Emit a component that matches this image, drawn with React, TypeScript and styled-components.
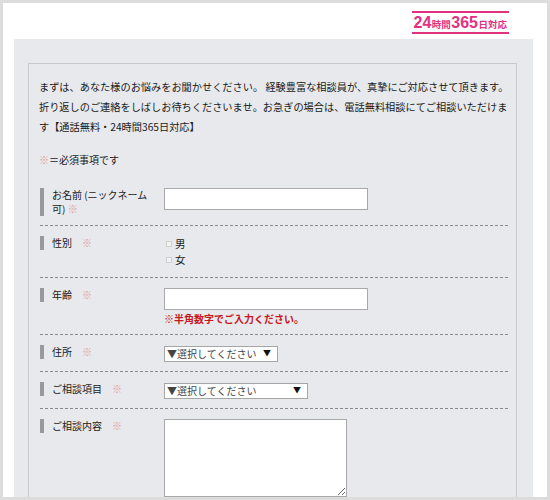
import styled, { createGlobalStyle } from 'styled-components';

const GlobalStyle = createGlobalStyle`
  body {
    margin: 0;
    font-family: 'Noto Sans CJK JP', 'Noto Sans', sans-serif;
    color: #333;
  }
`;

const App = () => {
  return (
    <>
      <GlobalStyle />
      <Frame>
        <Header>
          <Badge>
            <BadgeNum>24</BadgeNum>
            <BadgeText>時間</BadgeText>
            <BadgeNum>365</BadgeNum>
            <BadgeText>日対応</BadgeText>
          </Badge>
        </Header>

        <Panel>
          <FormBox>
            <Intro>
              まずは、あなた様のお悩みをお聞かせください。 経験豊富な相談員が、真摯にご対応させて頂きます。
              <br />
              折り返しのご連絡をしばしお待ちくださいませ。お急ぎの場合は、電話無料相談にてご相談いただけま
              <br />
              す【通話無料・24時間365日対応】
            </Intro>

            <Note>
              <Req>※</Req>＝必須事項です
            </Note>

            <Form>
              <Row>
                <Label>
                  お名前 (ニックネーム可) <Req>※</Req>
                </Label>
                <Field>
                  <TextInput type="text" />
                </Field>
              </Row>

              <Row>
                <Label>
                  性別　<Req>※</Req>
                </Label>
                <Field>
                  <CheckList>
                    <CheckItem>
                      <Check type="checkbox" />男
                    </CheckItem>
                    <CheckItem>
                      <Check type="checkbox" />女
                    </CheckItem>
                  </CheckList>
                </Field>
              </Row>

              <Row>
                <Label>
                  年齢　<Req>※</Req>
                </Label>
                <Field>
                  <TextInput type="text" />
                  <ErrorText>※半角数字でご入力ください。</ErrorText>
                </Field>
              </Row>

              <Row>
                <Label>
                  住所　<Req>※</Req>
                </Label>
                <Field>
                  <SelectWrap $width={114}>
                    <Select defaultValue="">
                      <option value="">▼選択してください</option>
                    </Select>
                  </SelectWrap>
                </Field>
              </Row>

              <Row>
                <Label>
                  ご相談項目　<Req>※</Req>
                </Label>
                <Field>
                  <SelectWrap $width={144}>
                    <Select defaultValue="">
                      <option value="">▼選択してください</option>
                    </Select>
                  </SelectWrap>
                </Field>
              </Row>

              <Row $last>
                <Label>
                  ご相談内容　<Req>※</Req>
                </Label>
                <Field>
                  <TextArea />
                </Field>
              </Row>
            </Form>
          </FormBox>
        </Panel>
      </Frame>
    </>
  );
};

export default App;

const Frame = styled.div`
  width: 550px;
  height: 500px;
  box-sizing: border-box;
  border: 3px solid #dcdcdc;
  background: #fff;
  overflow: hidden;
`;

const Header = styled.div`
  display: flex;
  justify-content: flex-end;
  height: 36px;
  box-sizing: border-box;
  padding: 8px 38px 0 0;
`;

const Badge = styled.div`
  display: flex;
  align-items: baseline;
  justify-content: center;
  width: 97px;
  height: 23px;
  box-sizing: border-box;
  border-top: 2px solid #e2317f;
  border-bottom: 2px solid #e2317f;
  color: #e2317f;
  line-height: 19px;
`;

const BadgeNum = styled.span`
  font-family: 'Liberation Sans', Arial, sans-serif;
  font-weight: bold;
  font-size: 16px;
`;

const BadgeText = styled.span`
  font-weight: bold;
  font-size: 9.5px;
  margin: 0 0.5px;
`;

const Panel = styled.div`
  margin: 0 14px 0 11px;
  padding: 24px 16px 0 14px;
  background: #e7e9ec;
  height: 100%;
`;

const FormBox = styled.div`
  border: 1px solid #c6c9cd;
  padding: 13px 4px 0 10px;
  height: 100%;
`;

const Intro = styled.p`
  margin: 0;
  font-size: 10.2px;
  line-height: 20px;
  color: #1a1a1a;
  white-space: nowrap;
`;

const Note = styled.p`
  margin: 13px 0 0;
  font-size: 10px;
  line-height: 20px;
  color: #1a1a1a;
`;

const Req = styled.span`
  color: #e39a9a;
`;

const Form = styled.div`
  margin: 8px 4px 0 1px;
`;

const Row = styled.div<{ $last?: boolean }>`
  display: grid;
  grid-template-columns: 124px 1fr;
  align-items: start;
  padding: 10px 0 9px;
  border-bottom: ${({ $last }) => ($last ? 'none' : '1px dashed #8a8a8a')};
`;

const Label = styled.div`
  border-left: 4px solid #999;
  padding: 0 14px 0 8px;
  font-size: 10px;
  line-height: 14px;
  color: #1a1a1a;
`;

const Field = styled.div`
  display: flex;
  flex-direction: column;
  align-items: flex-start;
`;

const TextInput = styled.input`
  display: block;
  width: 204px;
  height: 22px;
  box-sizing: border-box;
  margin: 0;
  border: 1px solid #a9a9a9;
  background: #fff;
  outline: none;
`;

const ErrorText = styled.span`
  margin-top: 2px;
  font-size: 10px;
  line-height: 13px;
  font-weight: bold;
  color: #c8161d;
`;

const CheckList = styled.div`
  display: flex;
  flex-direction: column;
`;

const CheckItem = styled.label`
  display: flex;
  align-items: center;
  font-size: 10.5px;
  line-height: 16px;
  color: #1a1a1a;
`;

const Check = styled.input`
  appearance: none;
  width: 6px;
  height: 6px;
  margin: 0 3px 0 2px;
  border: 1px solid #cfcfcf;
  background: #f2f2f2;
`;

const SelectWrap = styled.div<{ $width: number }>`
  position: relative;
  width: ${({ $width }) => $width}px;
  height: 16px;
  margin-top: 1px;

  &::after {
    content: '▼';
    position: absolute;
    right: 7px;
    top: 1px;
    font-size: 8px;
    line-height: 12px;
    color: #111;
    pointer-events: none;
  }
`;

const Select = styled.select`
  display: block;
  appearance: none;
  width: 100%;
  height: 16px;
  box-sizing: border-box;
  margin: 0;
  padding: 0 0 0 2px;
  border: 1px solid #a6a6a6;
  border-radius: 0;
  background: #fff;
  font-family: 'Noto Sans CJK JP', sans-serif;
  font-size: 10px;
  line-height: 14px;
  color: #444;
  outline: none;
`;

const TextArea = styled.textarea`
  display: block;
  width: 183px;
  height: 78px;
  box-sizing: border-box;
  margin: 0;
  border: 1px solid #a9a9a9;
  background: #fff;
  outline: none;
`;
